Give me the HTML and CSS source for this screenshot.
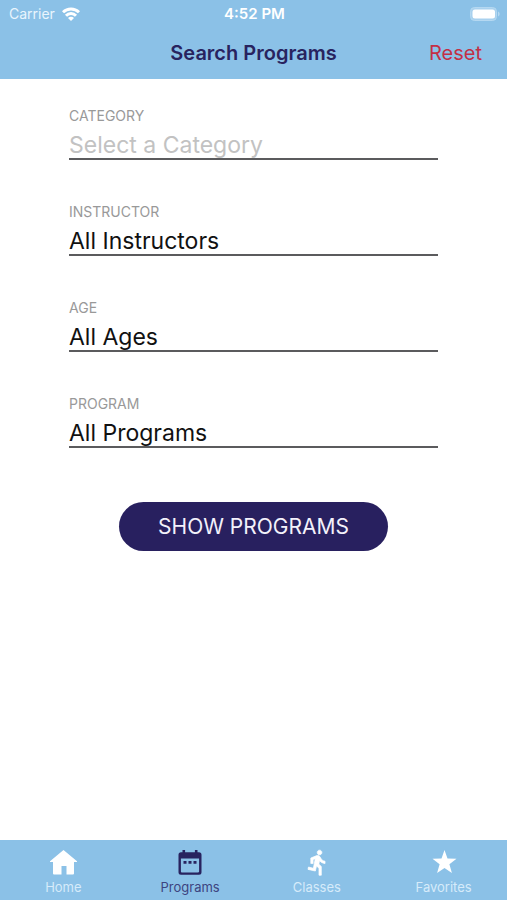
FILE: index.html
```html
<!DOCTYPE html>
<html lang="en">
<head>
<meta charset="utf-8">
<meta name="viewport" content="width=device-width, initial-scale=1">
<title>Search Programs</title>
<link rel="stylesheet" href="styles.css">
</head>
<body>
<header class="top">
  <div class="status">
    <span class="carrier">Carrier
      <svg class="wifi" viewBox="0 0 18 14" aria-hidden="true"><g fill="none" stroke="currentColor" stroke-width="3"><path d="M1 5.300a11.300 11.300 0 0 1 16 0"/><path d="M4 8.700a7 7 0 0 1 10 0"/></g><path d="M9 14 6 11a4.200 4.200 0 0 1 6 0z" fill="currentColor"/></svg>
    </span>
    <span class="time">4:52 PM</span>
    <svg class="battery" viewBox="0 0 30 14" role="img" aria-label="Battery full"><rect x=".5" y=".5" width="26" height="13" rx="4" fill="#a9d1ee" stroke="#b5d8f1"/><rect x="2.500" y="2.500" width="22.500" height="9" rx="2.500" fill="#fff"/><path d="M28 4.500c2.200 1 2.200 4 0 5z" fill="#b5d8f1"/></svg>
  </div>
  <div class="bar">
    <h1 class="title">Search Programs</h1>
    <button class="reset" type="button">Reset</button>
  </div>
</header>
<main class="content">
  <form class="form">
    <div class="field">
      <label for="category">CATEGORY</label>
      <select id="category" class="empty"><option>Select a Category</option></select>
    </div>
    <div class="field">
      <label for="instructor">INSTRUCTOR</label>
      <select id="instructor"><option>All Instructors</option></select>
    </div>
    <div class="field">
      <label for="age">AGE</label>
      <select id="age"><option>All Ages</option></select>
    </div>
    <div class="field">
      <label for="program">PROGRAM</label>
      <select id="program"><option>All Programs</option></select>
    </div>
    <button class="show" type="button">SHOW PROGRAMS</button>
  </form>
</main>
<nav class="tabs">
  <a class="tab" href="#home">
    <svg viewBox="0 0 28 28" aria-hidden="true"><path d="M14.500 1 28 12.200v.8h-3v11.500a1 1 0 0 1-1 1h-6.500V17h-5v8.500H5a1 1 0 0 1-1-1V13H1v-.8z" fill="currentColor"/></svg>
    Home
  </a>
  <a class="tab active" href="#programs" aria-current="page">
    <svg viewBox="0 0 28 28" aria-hidden="true"><path fill="currentColor" fill-rule="evenodd" d="M6.500 1h2.600v2.200h9.800V1h2.600v2.200H23A2.500 2.500 0 0 1 25.500 5.700v17.500A2.500 2.500 0 0 1 23 25.700H5a2.500 2.500 0 0 1-2.500-2.500V5.700A2.500 2.500 0 0 1 5 3.200h1.500zM4.900 9.500v13c0 .5.400.9.900.9h16.400c.5 0 .9-.4.900-.9v-13z"/><path fill="currentColor" d="M7.500 12h3v2.800h-3zm5 0h3v2.800h-3zm5 0h3v2.800h-3z"/></svg>
    Programs
  </a>
  <a class="tab" href="#classes">
    <svg viewBox="0 0 24 24" aria-hidden="true"><path fill="currentColor" stroke="currentColor" stroke-width=".6" transform="translate(.7 -.5)" d="M13.490 5.480c1.100 0 2-.9 2-2s-.9-2-2-2-2 .9-2 2 .9 2 2 2zm-3.600 13.900 1-4.400 2.100 2v6h2v-7.500l-2.100-2 .6-3c1.300 1.500 3 2.300 4.700 2.500v-2c-1.500-.2-2.700-1-3.500-2.400l-1-1.600c-.4-.6-1-1-1.700-1-.3 0-.5.100-.8.100l-5.200 2.200v4.700h2v-3.400l1.800-.7-1.600 8.100-4.200-1-.4 2z"/></svg>
    Classes
  </a>
  <a class="tab" href="#favorites">
    <svg viewBox="0 0 28 28" aria-hidden="true"><path fill="currentColor" d="m14.500 1 3 8.400 9 .3-7.100 5.600 2.500 8.700-7.400-5L7.100 24l2.500-8.700-7.100-5.600 9-.3z"/></svg>
    Favorites
  </a>
</nav>
</body>
</html>
```
FILE: styles.css
```css
* { box-sizing: border-box; }

body {
  margin: 0;
  min-height: 100vh;
  display: flex;
  flex-direction: column;
  background: #fff;
  color: #111;
  font-family: Inter, "Liberation Sans", sans-serif;
}

button, select { font-family: inherit; }

.top, .tabs { background: #8bc1e7; }

.status {
  display: grid;
  grid-template-columns: 1fr auto 1fr;
  align-items: center;
  height: 27px;
  padding: 0 7px 0 9px;
  color: #fff;
  font-size: 14px;
}

.carrier {
  display: flex;
  align-items: center;
  gap: 7px;
  color: #e9f5fd;
}

.wifi {
  width: 18px;
  height: 14px;
  color: #fff;
}

.time {
  font-size: 15px;
  font-weight: 600;
}

.battery {
  justify-self: end;
  width: 30px;
  height: 14px;
}

.bar {
  display: grid;
  grid-template-columns: 1fr auto 1fr;
  align-items: center;
  height: 52px;
  padding: 0 25px;
}

.title {
  grid-column: 2;
  margin: 0;
  color: #28235f;
  font-size: 20px;
  font-weight: 600;
}

.reset {
  justify-self: end;
  padding: 0;
  border: 0;
  background: none;
  color: #c32f45;
  font-size: 20px;
}

.content {
  flex: 1;
  padding: 27px 69px;
}

.form {
  display: flex;
  flex-direction: column;
  gap: 42px;
}

.field {
  display: flex;
  flex-direction: column;
}

.field label {
  color: #999;
  font-size: 14px;
  line-height: 20px;
}

.field select {
  width: 100%;
  height: 34px;
  padding: 5px 0 0;
  border: 0;
  border-bottom: 2px solid #5b5b5d;
  border-radius: 0;
  appearance: none;
  background: none;
  color: #111;
  font-size: 23px;
}

.field .empty { color: #c2c2c2; }

.show {
  align-self: center;
  width: 73%;
  height: 49px;
  margin-top: 12px;
  border: 0;
  border-radius: 25px;
  background: #28205f;
  color: #f3f1fb;
  font-size: 21px;
}

.tabs {
  display: grid;
  grid-template-columns: repeat(4, 1fr);
  height: 60px;
}

.tab {
  display: flex;
  flex-direction: column;
  align-items: center;
  padding-top: 9px;
  color: #d6ebfa;
  font-size: 13px;
  line-height: 16px;
  text-decoration: none;
}

.tab svg {
  width: 28px;
  height: 28px;
  margin-bottom: 2px;
  color: #fff;
}

.tab.active { color: #3d4480; }

.tab.active svg { color: #28235f; }
```
